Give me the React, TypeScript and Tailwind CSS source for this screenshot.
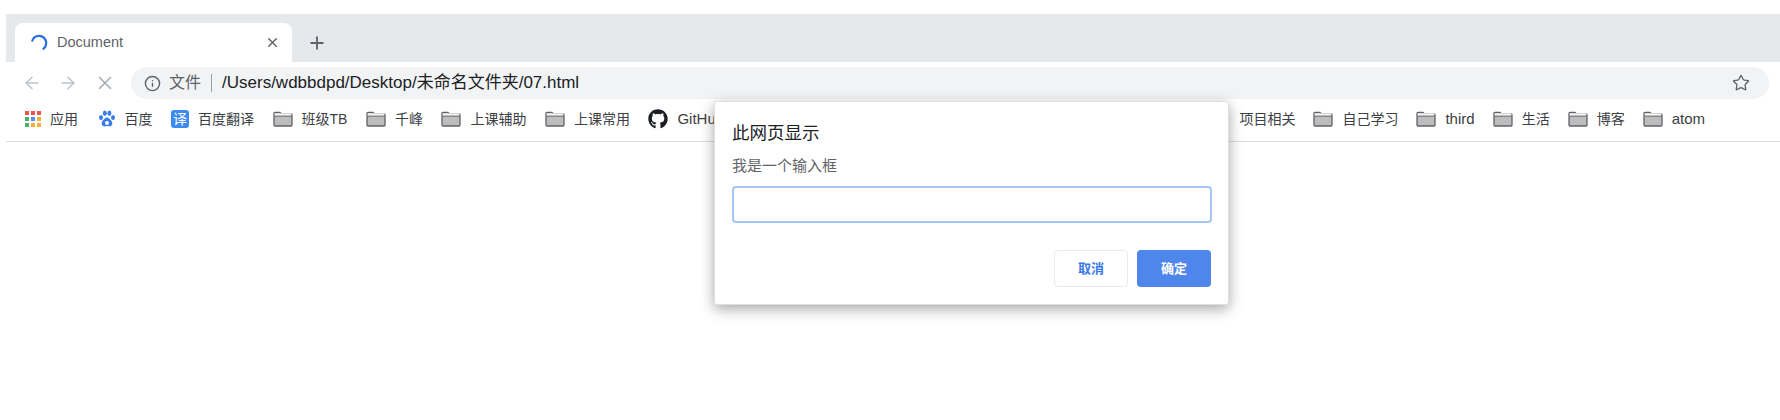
import { ArrowLeft, ArrowRight, Info, Plus, Star, X } from "lucide-react";
import { FaGithub } from "react-icons/fa";
import type { ReactNode } from "react";

const font = "font-['Liberation_Sans','Noto_Sans_CJK_SC',sans-serif]";

function Folder() {
  return (
    <svg width="20" height="16" viewBox="0 0 20 16" className="shrink-0">
      <path d="M1 2.500a1 1 0 0 1 1-1h5l1.500 1.500H18a1 1 0 0 1 1 1V14a1 1 0 0 1-1 1H2a1 1 0 0 1-1-1z" fill="#bdbdbd" stroke="#5f6368" strokeWidth="1.300" />
      <rect x="1.700" y="2.300" width="16.600" height="2.400" fill="#f4f4f4" />
      <path d="M1 5.200h18" stroke="#6e7276" strokeWidth="1" />
    </svg>
  );
}

function Apps() {
  const colors = ["#ea4335", "#ea4335", "#ea4335", "#34a853", "#4285f4", "#f5a623", "#34a853", "#f5a623", "#f5a623"];
  return (
    <div className="grid grid-cols-3 gap-[2.500px] w-[16px] shrink-0 ml-[1px]">
      {colors.map((c, i) => (
        <div key={i} className="w-[3.600px] h-[3.600px] opacity-90" style={{ backgroundColor: c }} />
      ))}
    </div>
  );
}

function Paw() {
  return (
    <svg width="18" height="18" viewBox="0 0 18 18" className="shrink-0 ml-[1px]">
      <g fill="#3b7de8">
        <ellipse cx="3" cy="7.500" rx="2" ry="2.600" />
        <ellipse cx="6.800" cy="3.200" rx="2" ry="2.700" />
        <ellipse cx="11.400" cy="3.200" rx="2" ry="2.700" />
        <ellipse cx="15" cy="7.500" rx="2" ry="2.600" />
        <path d="M9 7.500c2 0 3 2 4.300 3.200 1.600 1.400 1.600 5.800-2 5.800-1 0-1.500-.4-2.300-.4s-1.300.4-2.300.4c-3.600 0-3.600-4.400-2-5.800C6 9.500 7 7.500 9 7.500z" />
      </g>
      <circle cx="9" cy="13" r="2" fill="#fff" />
    </svg>
  );
}

function Translate() {
  return (
    <div className="w-[18px] h-[18px] rounded-[3px] bg-[#3d8bf2] text-white text-[14px] leading-[18px] text-center shrink-0">
      译
    </div>
  );
}

function Mark({ icon, label, latin }: { icon: ReactNode; label: string; latin?: boolean }) {
  return (
    <div className="flex items-center gap-[9px] whitespace-nowrap">
      {icon}
      <span className={latin ? "text-[15px]" : ""}>{label}</span>
    </div>
  );
}

export default function App() {
  return (
    <div className={`relative w-[1780px] h-[420px] bg-white overflow-hidden pt-[14px] pl-[6px] ${font}`}>
      {/* tab strip */}
      <div className="h-[48px] bg-[#e6e9ec] pt-[9px] pl-[9px] flex">
        <div className="w-[277px] h-[39px] bg-white rounded-t-[8px] flex items-center pl-[15px] pr-[12px]">
          <svg width="18" height="18" viewBox="0 0 18 18" className="shrink-0">
            <path d="M2 7.500C3 3.500 6 1.800 9 1.800c4 0 7.200 3.200 7.200 7.200 0 2.800-1.400 5-3.500 6.300" fill="none" stroke="#2b6fdc" strokeWidth="2.200" />
          </svg>
          <span className="ml-[9px] mt-[1px] text-[14.500px] text-[#5f6368]">Document</span>
          <X className="ml-auto w-[15px] h-[15px] text-[#5f6368]" strokeWidth={2.2} />
        </div>
        <Plus className="ml-[15px] mt-[10px] w-[20px] h-[20px] text-[#5f6368]" strokeWidth={2.2} />
      </div>

      {/* toolbar */}
      <div className="h-[42px] flex items-center pl-[16px] pr-[11px]">
        <ArrowLeft className="w-[20px] h-[20px] text-[#bdc1c6] shrink-0" strokeWidth={1.7} />
        <ArrowRight className="ml-[16px] w-[20px] h-[20px] text-[#bdc1c6] shrink-0" strokeWidth={1.7} />
        <X className="ml-[16px] w-[22px] h-[22px] text-[#a9adb1] shrink-0" strokeWidth={1.7} />
        <div className="ml-[15px] flex-1 h-[32px] rounded-full bg-[#f1f3f4] flex items-center pl-[13px] pr-[19px]">
          <Info className="w-[17px] h-[17px] text-[#5f6368] shrink-0" strokeWidth={2} />
          <span className="ml-[8px] text-[16px] text-[#5f6368]">文件</span>
          <div className="ml-[10px] w-px h-[18px] bg-[#9aa0a6]" />
          <span className="ml-[10px] text-[17px] text-[#202124]">/Users/wdbbdpd/Desktop/未命名文件夹/07.html</span>
          <Star className="ml-auto w-[18px] h-[18px] text-[#5f6368]" strokeWidth={1.8} />
        </div>
      </div>

      {/* bookmarks */}
      <div className="h-[39px] -mt-[1px] pb-[6px] border-b border-[#dadce0] flex items-center justify-between pl-[18px] pr-[75px] text-[14px] text-[#3c4043]">
        <div className="flex items-center gap-[18.500px]">
          <Mark icon={<Apps />} label="应用" />
          <Mark icon={<Paw />} label="百度" />
          <Mark icon={<Translate />} label="百度翻译" />
          <Mark icon={<Folder />} label="班级TB" />
          <Mark icon={<Folder />} label="千峰" />
          <Mark icon={<Folder />} label="上课辅助" />
          <Mark icon={<Folder />} label="上课常用" />
          <Mark icon={<FaGithub className="w-[20px] h-[20px] text-[#1b1f23] shrink-0" />} label="GitHub" latin />
        </div>
        <div className="flex items-center gap-[18px]">
          <span>项目相关</span>
          <Mark icon={<Folder />} label="自己学习" />
          <Mark icon={<Folder />} label="third" latin />
          <Mark icon={<Folder />} label="生活" />
          <Mark icon={<Folder />} label="博客" />
          <Mark icon={<Folder />} label="atom" latin />
        </div>
      </div>

      {/* prompt dialog */}
      <div className="absolute left-[714px] top-[101px] w-[515px] h-[204px] bg-white rounded-[3px] border border-[#e0e0e0] shadow-[0_4px_14px_rgba(0,0,0,0.35)] pl-[17px] pr-[16px] pt-[20px]">
        <div className="text-[17.500px] leading-[22px] text-[#202124]">此网页显示</div>
        <div className="mt-[11px] text-[15px] leading-[22px] text-[#5f6368]">我是一个输入框</div>
        <input className="mt-[9px] block w-[480px] h-[37px] rounded-[4px] border-2 border-[#a3c6f2] outline-none" />
        <div className="mt-[27px] mr-[1px] flex justify-end gap-[9px]">
          <button className="w-[74px] h-[37px] rounded-[4px] border border-[#e8eaed] bg-white text-[13px] font-bold text-[#3b78e7]">取消</button>
          <button className="w-[74px] h-[37px] rounded-[4px] bg-[#4f86ec] text-[13px] font-bold text-white">确定</button>
        </div>
      </div>
    </div>
  );
}
